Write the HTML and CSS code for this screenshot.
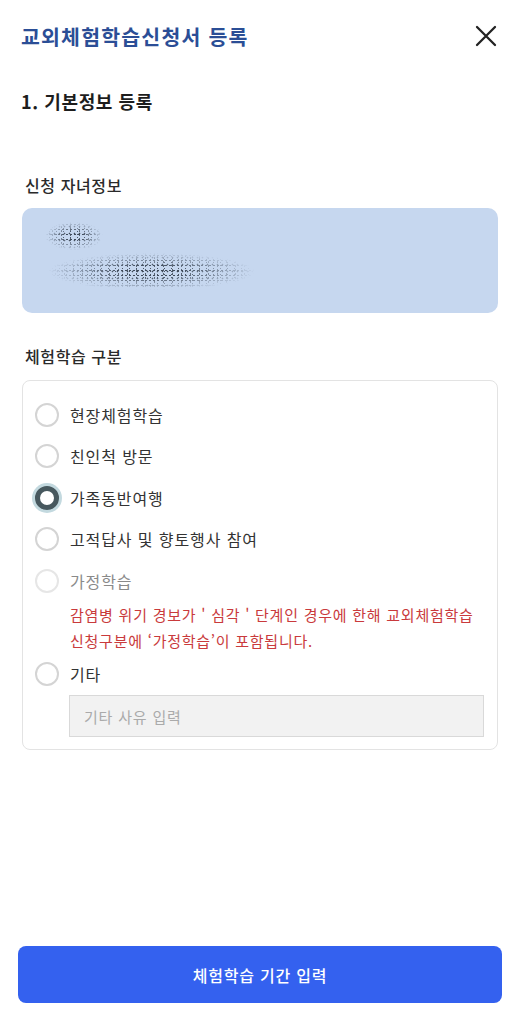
FILE: index.html
```html
<!DOCTYPE html>
<html lang="ko">
    <head>
        <meta charset="UTF-8" />
        <meta name="viewport" content="width=device-width, initial-scale=1.0" />
        <title>교외체험학습신청서 등록</title>
        <link rel="stylesheet" href="styles.css">
    </head>
    <body>
        <div class="page">
            <header class="top-bar">
                <h1 class="title">교외체험학습신청서 등록</h1>
                <button class="close-btn" aria-label="닫기">
                    <svg width="24" height="24" viewBox="0 0 24 24">
                        <path d="M3 3 L21 21 M21 3 L3 21" stroke="#222" stroke-width="2.3" stroke-linecap="round" fill="none" />
                    </svg>
                </button>
            </header>

            <main class="content">
                <h2 class="step">1. 기본정보 등록</h2>

                <h3 class="label">신청 자녀정보</h3>
                <div class="child-box">
                    <span class="masked masked-name" aria-label="이름"></span>
                    <span class="masked masked-info" aria-label="학교 정보"></span>
                </div>

                <h3 class="label label-kind">체험학습 구분</h3>
                <div class="option-card">
                    <label class="option">
                        <span class="radio"></span>
                        <span>현장체험학습</span>
                    </label>
                    <label class="option">
                        <span class="radio"></span>
                        <span>친인척 방문</span>
                    </label>
                    <label class="option">
                        <span class="radio checked"></span>
                        <span>가족동반여행</span>
                    </label>
                    <label class="option">
                        <span class="radio"></span>
                        <span>고적답사 및 향토행사 참여</span>
                    </label>
                    <label class="option disabled">
                        <span class="radio"></span>
                        <span>가정학습</span>
                    </label>
                    <p class="notice">감염병 위기 경보가 ' 심각 ' 단계인 경우에 한해 교외체험학습<br>신청구분에 ‘가정학습’이 포함됩니다.</p>
                    <label class="option">
                        <span class="radio"></span>
                        <span>기타</span>
                    </label>
                    <input type="text" class="etc-input" placeholder="기타 사유 입력">
                </div>
            </main>

            <footer class="bottom">
                <button class="next-btn">체험학습 기간 입력</button>
            </footer>
        </div>
    </body>
</html>
```

FILE: styles.css
```css
body {
    margin: 0;
    font-family: "Noto Sans CJK KR", "Noto Sans", sans-serif;
    color: #222;
    background: #fff;
}

.page {
    min-height: 100vh;
    display: flex;
    flex-direction: column;
}

.top-bar {
    height: 72px;
    display: flex;
    align-items: center;
    justify-content: space-between;
    padding: 0 22px 0 21px;
}

.title {
    margin: 0;
    font-size: 20.5px;
    font-weight: 700;
    letter-spacing: 1.2px;
    color: #2b4e96;
}

.close-btn {
    border: none;
    background: none;
    padding: 0;
    width: 24px;
    height: 24px;
    cursor: pointer;
}

.content {
    padding: 0 22px;
}

.step {
    margin: 16px 0 0 -1px;
    font-size: 18px;
    line-height: 26px;
    font-weight: 700;
    letter-spacing: 0.6px;
    color: #1d1d1d;
}

.label {
    margin: 60px 0 12px 3px;
    font-size: 16px;
    line-height: 22px;
    font-weight: 500;
    letter-spacing: 0.6px;
    color: #2a2a2a;
}

.label-kind {
    margin-top: 32px;
    margin-bottom: 13px;
}

.child-box {
    height: 105px;
    box-sizing: border-box;
    border-radius: 10px;
    background: #c6d7ef;
    padding: 14px 0 0 23px;
}

/* 개인정보 가림 처리 (노이즈) */
.masked {
    display: block;
    background:
        radial-gradient(circle, #1e2836 0.7px, transparent 1.1px) 0 0 / 4px 5px,
        radial-gradient(circle, #2a3442 0.6px, transparent 1px) 1px 2px / 7px 3px,
        radial-gradient(circle, #1e2836 0.7px, transparent 1.1px) 2px 1px / 5px 7px,
        radial-gradient(circle, #3a4452 0.5px, transparent 0.9px) 3px 3px / 9px 4px;
    -webkit-mask-image: radial-gradient(ellipse closest-side, #000 30%, transparent 100%);
    mask-image: radial-gradient(ellipse closest-side, #000 30%, transparent 100%);
    opacity: 0.8;
}

.masked-name {
    width: 58px;
    height: 28px;
}

.masked-info {
    width: 207px;
    height: 37px;
    margin: 3px 0 0 3px;
}

.option-card {
    border: 1px solid #e3e3e3;
    border-radius: 8px;
    padding: 13px 13px 12px 12px;
}

.option {
    display: flex;
    align-items: center;
    gap: 11px;
    height: 41.5px;
    font-size: 16px;
    letter-spacing: 0.9px;
    color: #333;
}

.radio {
    width: 24px;
    height: 24px;
    box-sizing: border-box;
    border: 2px solid #d4d4d4;
    border-radius: 50%;
    background: #fff;
    flex-shrink: 0;
}

.radio.checked {
    border: 5px solid #47585e;
    box-shadow: 0 0 0 3px #c3d9df;
}

.disabled {
    color: #8a8a8a;
}

.disabled .radio {
    border-color: #e6e6e6;
}

.notice {
    margin: 0 0 0 35px;
    font-size: 15px;
    line-height: 26px;
    letter-spacing: 0.75px;
    color: #c93a3c;
}

.etc-input {
    display: block;
    box-sizing: border-box;
    width: calc(100% - 34px);
    margin-left: 34px;
    height: 42px;
    border: 1px solid #d9d9d9;
    background: #f2f2f2;
    padding: 0 14px;
    font-family: inherit;
    font-size: 15px;
    letter-spacing: 0.8px;
}

.etc-input::placeholder {
    color: #aaa;
}

.bottom {
    margin-top: auto;
    padding: 0 18px 21px;
}

.next-btn {
    width: 100%;
    height: 57px;
    border: none;
    border-radius: 8px;
    background: #3461ef;
    color: #fff;
    font-family: inherit;
    font-size: 16px;
    font-weight: 500;
    letter-spacing: 0.8px;
    cursor: pointer;
}
```
